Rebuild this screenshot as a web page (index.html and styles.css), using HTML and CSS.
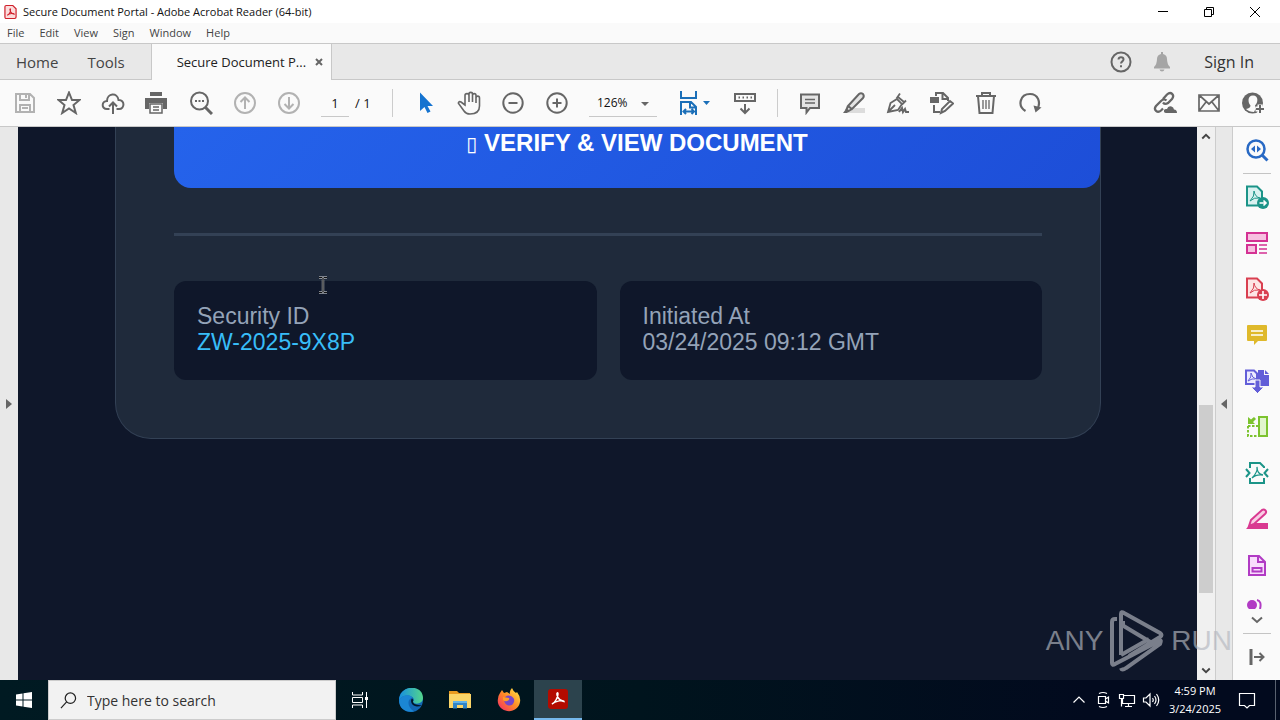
FILE: index.html
```
<!DOCTYPE html>
<html lang="en">

<head>
    <meta charset="UTF-8">
    <meta name="viewport" content="width=device-width, initial-scale=1.0">
    <title>Secure Document Portal - Adobe Acrobat Reader (64-bit)</title>
    <link rel="stylesheet" href="styles.css">
</head>

<body>
    <header>
        <div class="titlebar">
            <svg class="app-icon" viewBox="0 0 14 16"><path d="M1 2.500Q1 1 2.500 1H9.500L13 4.500V13.500Q13 15 11.500 15H2.500Q1 15 1 13.500Z" fill="#fbdcdc" stroke="#d0212c" stroke-width="1.300"/><path d="M3.500 11.500C5.500 10.500 7 7.500 7 5.500C7 4 6 4.500 6.500 6C7 8 9 10 11 10.300C11 9 6 9.500 3.500 11.500Z" fill="none" stroke="#d0212c" stroke-width="1.200"/></svg>
            <h1>Secure Document Portal - Adobe Acrobat Reader (64-bit)</h1>
            <div class="window-buttons">
                <button aria-label="Minimize"><svg viewBox="0 0 12 12"><path d="M1 5.500H11"/></svg></button>
                <button aria-label="Restore"><svg viewBox="0 0 12 12"><path d="M1.500 3.500H8.500V10.500H1.500ZM3.500 3.500V1.500H10.500V8.500H8.500"/></svg></button>
                <button aria-label="Close"><svg viewBox="0 0 12 12"><path d="M1 1L11 11M11 1L1 11"/></svg></button>
            </div>
        </div>

        <nav class="menubar">
            <button>File</button>
            <button>Edit</button>
            <button>View</button>
            <button>Sign</button>
            <button>Window</button>
            <button>Help</button>
        </nav>

        <div class="tabs">
            <button class="tab">Home</button>
            <button class="tab tools">Tools</button>
            <div class="tab-open">
                <button class="tab-name">Secure Document P...</button>
                <button class="tab-close" aria-label="Close tab"><svg viewBox="0 0 8 8"><path d="M1 1L7 7M7 1L1 7" stroke="#666" stroke-width="2"/></svg></button>
            </div>
            <div class="account">
                <button class="icon" aria-label="Help"><svg viewBox="0 0 24 24"><circle cx="12" cy="12" r="9.500"/><path d="M9.500 9.500Q9.700 7.300 12 7.300Q14.500 7.300 14.500 9.500C14.500 11.300 12 11.500 12 13.500M12 15.300V17.300"/></svg></button>
                <button class="icon" aria-label="Notifications"><svg viewBox="0 0 24 24"><path d="M11 2H13V4Q17 5 17 9Q17 14 20 17V18.500H4V17Q7 14 7 9Q7 5 11 4ZM9.500 19.500H14.500Q14 21.500 12 21.500Q10 21.500 9.500 19.500Z" fill="#a5a5a5" stroke="none"/></svg></button>
                <button class="sign-in">Sign In</button>
            </div>
        </div>

        <div class="toolbar">
            <button class="icon pale" aria-label="Save"><svg viewBox="0 0 24 24"><path d="M3 3H17L21 7V21H3ZM7 3V9H16V3M13 4V7M7 21V14H17V21M9 17H15"/></svg></button>
            <button class="icon" aria-label="Star"><svg viewBox="0 0 24 24"><path d="M12 1.500L15 9H22.500L16.500 14L18.800 22L12 17.500L5.200 22L7.500 14L1.500 9H9Z"/></svg></button>
            <button class="icon" aria-label="Upload"><svg viewBox="0 0 24 24"><path d="M8.500 18H6C0 18 .5 10 6 10C6 2 16.500 1 17.500 9C24 8.500 24 18 18 18H15.500M12 23V12M8 15.500L12 11.500L16 15.500"/></svg></button>
            <button class="icon" aria-label="Print"><svg viewBox="0 0 24 24"><path d="M5 1H17V5H5ZM0 7H22V18H18V12H4V18H0Z" fill="#666" stroke="none"/><path d="M5 13H17V22H5ZM8 16H14M8 19H14" stroke-width="1.500"/></svg></button>
            <button class="icon" aria-label="Find"><svg viewBox="0 0 24 24"><circle cx="10.500" cy="10" r="8.500"/><path d="M16.500 16.500L23 23" stroke-width="3"/><path d="M6 10H8M9.500 10H11.500M13 10H15"/></svg></button>
            <button class="icon pale" aria-label="Previous page"><svg viewBox="0 0 24 24"><circle cx="12" cy="12" r="10"/><path d="M12 18V7M7.500 11L12 6.500L16.500 11"/></svg></button>
            <button class="icon pale" aria-label="Next page"><svg viewBox="0 0 24 24"><circle cx="12" cy="12" r="10"/><path d="M12 6V17M7.500 13L12 17.500L16.500 13"/></svg></button>
            <div class="pages">
                <input type="text" value="1" aria-label="Page number">
                <span>/ 1</span>
            </div>
            <span class="divider"></span>
            <button class="icon" aria-label="Select"><svg viewBox="0 0 24 24"><path d="M7 1.500V20L11.500 16L14.500 22L17.500 20.500L14.500 15H20Z" fill="#1473d0" stroke="none"/></svg></button>
            <button class="icon" aria-label="Hand"><svg viewBox="0 0 24 24"><path d="M8 14L4 11C2 10 .5 12 2 13L7 20Q9 23 13 23C20 23 22.500 20 22.500 15V7C22.500 4.500 19 4.500 19 7V12V4.500C19 2 15.500 2 15.500 4.500V11V3C15.500 .8 12 .8 12 3V11V4.500C12 2 8 2 8 4.500Z" stroke-width="1.600"/></svg></button>
            <button class="icon" aria-label="Zoom out"><svg viewBox="0 0 24 24"><circle cx="12" cy="12" r="9.700"/><path d="M7.500 12H16.500"/></svg></button>
            <button class="icon" aria-label="Zoom in"><svg viewBox="0 0 24 24"><circle cx="12" cy="12" r="9.700"/><path d="M7.500 12H16.500M12 7.500V16.500"/></svg></button>
            <div class="zoom">
                <select aria-label="Zoom level">
                    <option>126%</option>
                </select>
            </div>
            <button class="icon fit" aria-label="Fit page"><svg viewBox="0 0 36 24"><path d="M4 0V7H19V0M4 24V11H14L19 16V24M13 11V16.500H19M6.500 20.500H17M9 18L6.500 20.500L9 23M14.500 18L17 20.500L14.500 23" stroke="#1b6fb8"/><path d="M26 10H33L29.500 14Z" fill="#1b6fb8" stroke="none"/></svg></button>
            <button class="icon" aria-label="Scrolling"><svg viewBox="0 0 24 24"><path d="M2 3H22V10H2ZM5.500 6.500H7M9.500 6.500H11M13.500 6.500H15M17.500 6.500H19M12 13V22M7.500 17.500L12 22L16.500 17.500"/></svg></button>
            <span class="divider"></span>
            <button class="icon" aria-label="Comment"><svg viewBox="0 0 24 24"><path d="M3 3.500H21V17H12L8.500 21.500V17H3Z" fill="#e4e4e4"/><path d="M7 8.500H17M7 12H17" stroke-width="1.500"/></svg></button>
            <button class="icon" aria-label="Highlight"><svg viewBox="0 0 24 24"><path d="M9 17H23V22H5Z" fill="#dcdcdc" stroke="none"/><path d="M6 15L17 3Q19 1.500 21 3Q22.500 5 21 7L10 18ZM6 15L4.500 18.500L6.500 20L10 18" fill="#e4e4e4"/><path d="M1 22L4 18L7 20.500L5 22Z" fill="#666" stroke="none"/></svg></button>
            <button class="icon" aria-label="Sign"><svg viewBox="0 0 24 24"><path d="M2 21L4.500 12L11 8L16 13L12 19ZM2.500 20.500L9 14M10.500 7.500L14 2.500M16 13.500L20 9.500M12 6L18 11" stroke-width="1.800"/><path d="M13 21L16 17L17 21L19 18L20 21H23"/></svg></button>
            <button class="icon" aria-label="Edit document"><svg viewBox="0 0 24 24"><path d="M6 5V2H13L18 7V10M12.500 2V8H18M4 14V21H10M11 22L12 18L20 10L23 12.500L15 20Z"/><path d="M0 6H9V12H0Z" fill="#666" stroke="none"/></svg></button>
            <button class="icon" aria-label="Delete"><svg viewBox="0 0 24 24"><path d="M2 5H22M8 5V2H16V5M4 5L5.500 22H18.500L20 5"/><path d="M9 9V18M12 9V18M15 9V18" stroke-width="1.300"/></svg></button>
            <button class="icon" aria-label="Rotate"><svg viewBox="0 0 24 24"><path d="M7.500 20C-1 15 2 3 12 3C20 3 23 11 19.500 18" stroke-width="2.200"/><path d="M23.500 16.500L17.500 21.500L15.500 14.500Z" fill="#666" stroke="none"/></svg></button>
            <div class="share">
                <button class="icon" aria-label="Copy link"><svg viewBox="0 0 24 24"><path d="M10 8L14 3.500C18 0 22 4 19 8L15 12Q12 14 10 11.500M13.500 9.500Q11 7 8 10L3 15C0 19 4.500 22.500 8 19.500L10 17.500" stroke-width="2.300"/><path d="M13 22Q10.500 22 11 19Q12 17.500 14 18Q15 14.500 18.500 15.500Q20.500 16 21 18.500Q24 18.500 24 22Z" fill="#666" stroke="none"/></svg></button>
                <button class="icon" aria-label="Email"><svg viewBox="0 0 24 24"><path d="M2 4H22V20H2ZM2 4L12 13L22 4M2 20L9 11M22 20L15 11" stroke-width="1.700"/></svg></button>
                <button class="icon" aria-label="Share with people"><svg viewBox="0 0 24 24"><circle cx="11.500" cy="12" r="10.500" fill="#666" stroke="none"/><path d="M12 4.500C6 4.500 7 12 9.500 14.500Q9.500 17 5 18Q8 21 13 21L15 17Q14 16 14 14.500C17 12 18 4.500 12 4.500Z" fill="#fafafa" stroke="none"/><path d="M19 13.500V22.500M14.500 18H23.500" stroke="#fafafa" stroke-width="5"/><path d="M19 14V22M15 18H23"/></svg></button>
            </div>
        </div>
    </header>

    <main>
        <button class="left-strip" aria-label="Show navigation pane"><svg viewBox="0 0 6 10"><path d="M0 0L6 5L0 10Z" fill="#666"/></svg></button>

        <section class="document">
            <article class="card">
                <button class="verify"><span class="box">▯</span> VERIFY &amp; VIEW DOCUMENT</button>
                <hr>
                <div class="info">
                    <div class="info-box">
                        <p>Security ID</p>
                        <p class="code">ZW-2025-9X8P</p>
                    </div>
                    <div class="info-box">
                        <p>Initiated At</p>
                        <p>03/24/2025 09:12 GMT</p>
                    </div>
                </div>
            </article>
            <svg class="cursor" viewBox="0 0 10 18"><path d="M1 1.500H4L5 2.500L6 1.500H9M1 16.500H4L5 15.500L6 16.500H9M5 2.500V15.500" fill="none" stroke="#a4a8ae" stroke-width="2.500"/><path d="M1 1.500H4L5 2.500L6 1.500H9M1 16.500H4L5 15.500L6 16.500H9M5 2.500V15.500" fill="none" stroke="#111" stroke-width="1"/></svg>
        </section>

        <div class="scrollbar">
            <button aria-label="Scroll up"><svg viewBox="0 0 8 6"><path d="M1 5L4 2L7 5"/></svg></button>
            <div class="track"><div class="thumb"></div></div>
            <button aria-label="Scroll down"><svg viewBox="0 0 8 6"><path d="M1 1L4 4L7 1"/></svg></button>
        </div>

        <button class="right-strip" aria-label="Hide tools pane"><svg viewBox="0 0 6 10"><path d="M6 0L0 5L6 10Z" fill="#666"/></svg></button>

        <aside class="tools-pane">
            <button class="icon" aria-label="Search tools"><svg viewBox="0 0 24 24" stroke="#2869c4"><circle cx="11" cy="11" r="8.500" stroke-width="2.500"/><path d="M17 17L22.500 22.500" stroke-width="3"/><path d="M10 7.500V14.500L6 11ZM12 7.500V14.500L16 11Z" fill="#2869c4" stroke="none"/></svg></button>
            <span class="line"></span>
            <button class="icon" aria-label="Export PDF"><svg viewBox="0 0 24 24" stroke="#1b9488"><path d="M2 1.500H12L17 6.500V20.500H2Z" fill="#d9f1f0"/><path d="M5 16Q10 11 9 6Q10 12 15 13Q9 12 5 16" stroke-width="1"/><circle cx="18" cy="18" r="6" fill="#1b9488" stroke="none"/><path d="M14.500 18H21M18.500 15.500L21 18L18.500 20.500" stroke="#fff" stroke-width="1.600"/></svg></button>
            <button class="icon" aria-label="Organize pages"><svg viewBox="0 0 24 24" stroke="#d43193"><path d="M2 2H22V10H2ZM2 14H11V22H2Z" fill="#f7bfe0"/><path d="M14 14H22M14 18H22M14 22H22" stroke-width="1.300"/></svg></button>
            <button class="icon" aria-label="Create PDF"><svg viewBox="0 0 24 24" stroke="#d93f50"><path d="M2 1.500H12L17 6.500V20.500H2Z" fill="#fde5e5"/><path d="M5 16Q10 11 9 6Q10 12 15 13Q9 12 5 16" stroke-width="1"/><circle cx="18" cy="18" r="6" fill="#d93f50" stroke="none"/><path d="M14 18H22M18 14V22" stroke="#fff" stroke-width="1.600"/></svg></button>
            <button class="icon" aria-label="Comment"><svg viewBox="0 0 24 24"><path d="M3 2H21Q22 2 22 3V17Q22 18 21 18H13L9 22V18H3Q2 18 2 17V3Q2 2 3 2Z" fill="#dfb92b" stroke="none"/><path d="M6 8H18M6 12H18" stroke="#fff" stroke-width="1.500"/></svg></button>
            <button class="icon" aria-label="Combine files"><svg viewBox="0 0 24 24" stroke="#625ed8"><path d="M13 1H19V6H24V17H13Z" fill="#625ed8" stroke="none"/><path d="M20 1L24 5H20Z" fill="#625ed8" stroke="none"/><path d="M1 1.500H9L12 4.500V15H1Z" fill="#ecebff"/><path d="M3 12Q7 8 6 4Q7 9 11 10Q7 9 3 12" stroke-width="1"/><path d="M10 11H15V18H19L12.500 24.500L6 18H10Z" fill="#625ed8" stroke="#f8f8f8" stroke-width="1"/></svg></button>
            <button class="icon" aria-label="Compare files"><svg viewBox="0 0 24 24" stroke="#7cc32f"><path d="M14 2H22V21H14Z" fill="#e1f5cd"/><path d="M3 11H13M3 11V21H13" stroke-dasharray="2.500 1.500"/><path d="M3 2V9H10L8 7L11 4L9 2L6 4.500Z" fill="#7cc32f" stroke="none"/></svg></button>
            <button class="icon" aria-label="Compress PDF"><svg viewBox="0 0 24 24" stroke="#1b9488"><path d="M5 7V2H15L19 6V7M5 17V22H19V17M1 8L4.500 12L1 16M23 8L19.500 12L23 16"/><path d="M7 17Q13 11 12 6Q12 13 18 14Q11 13 7 17" stroke-width="1.300"/></svg></button>
            <button class="icon" aria-label="Redact"><svg viewBox="0 0 24 24" stroke="#d93a91"><path d="M11 16H23V22H1Q4 19 6 16Z" fill="#d93a91" stroke="none"/><path d="M6 13L17 3Q19 2 20.500 3.500Q22 5 20 7L9 17L4 19Z" fill="#f9cee5"/></svg></button>
            <button class="icon" aria-label="Prepare form"><svg viewBox="0 0 24 24" stroke="#b13bc4"><path d="M4 3H14L20 9V22H4Z" fill="#f8dcfc"/><path d="M13 3V9H20M7.500 15H16.500V18.500H7.500Z"/></svg></button>
            <button class="icon clipped" aria-label="More"><svg viewBox="0 0 24 24"><circle cx="7" cy="6" r="5" fill="#b13bc4" stroke="none"/><path d="M12 1Q17 2 15 10" stroke="#b13bc4"/></svg></button>
            <button class="more" aria-label="Scroll tools"><svg viewBox="0 0 14 8"><path d="M2 1.500L7 6L12 1.500"/></svg></button>
            <span class="line low"></span>
            <button class="icon" aria-label="Collapse"><svg viewBox="0 0 24 24"><path d="M6 4V20" stroke-width="3"/><path d="M9 12H18M14.500 8L18.500 12L14.500 16"/></svg></button>
        </aside>

        <div class="watermark">
            <span>ANY</span>
            <svg viewBox="0 0 56 62"><path d="M12 45V4Q12 1 15 3L51 23Q54 25 51 27L20 46M14 18V11M8 9H6Q3 9 3 12V53Q3 56 6 54L50 31Q53 29 51 34L17 58Q13 61 12 58M13 15L43 33M12 45L40 29"/></svg>
            <span>RUN</span>
        </div>
    </main>

    <footer class="taskbar">
        <button class="start" aria-label="Start"><svg viewBox="0 0 16 16"><path d="M0 2.500L6.500 1.500V7.500H0ZM7.500 1.300L16 0V7.500H7.500ZM0 8.500H6.500V14.500L0 13.500ZM7.500 8.500H16V16L7.500 14.700Z" fill="#fff"/></svg></button>
        <label class="search">
            <svg viewBox="0 0 18 18"><circle cx="11" cy="6.500" r="5.500" fill="none" stroke="#222" stroke-width="1.300"/><path d="M7 10.500L1 17" stroke="#222" stroke-width="1.300"/></svg>
            <input type="text" placeholder="Type here to search" aria-label="Search">
        </label>
        <div class="apps">
            <button aria-label="Task view"><svg viewBox="0 0 24 24"><path d="M4.500 4V7H14.500V4M4.500 20V17H14.500V20M4.500 9.500H14.500V14.500H4.500ZM18.500 4V20" fill="none" stroke="#fff"/><path d="M17 9H20V12H17Z" fill="#fff"/></svg></button>
            <button class="edge" aria-label="Edge">
                <svg viewBox="0 0 24 24">
                    <defs>
                        <linearGradient id="edgeTop"><stop offset="0" stop-color="#168ee0"/><stop offset="1" stop-color="#54d68c"/></linearGradient>
                    </defs>
                    <circle cx="12" cy="12" r="12" fill="#1267b5"/><path d="M0 12C1 -4 24 -4 24 10C24 16 16 17 14 14C18 8 5 4 0 12Z" fill="url(#edgeTop)"/><path d="M0 12C3 6 13 6 13 10C8 11 8 19 15 23.500C7 25 0 21 0 12Z" fill="#1b86d4"/><path d="M13 10.500C11 12 12 18 18 18.500Q21 18.500 23 17Q19 17.500 15.500 16Q13 14 14.500 12Z" fill="#02172a"/>
                </svg>
            </button>
            <button aria-label="File Explorer"><svg viewBox="0 0 24 24"><path d="M1 3H9L11 5H22V9H1Z" fill="#e99b20"/><path d="M1 6H23V20H1Z" fill="#fbd568"/><path d="M5 13H19V20.500H15V17H9V20.500H5Z" fill="#3285c6"/><path d="M5 13H19V15H5Z" fill="#62b3e9"/></svg></button>
            <button aria-label="Firefox">
                <svg viewBox="0 0 24 24">
                    <defs>
                        <linearGradient id="fox" x1="1" y1="0" x2="0" y2="1"><stop offset="0" stop-color="#fff04b"/><stop offset=".5" stop-color="#ff8a25"/><stop offset="1" stop-color="#f4236e"/></linearGradient>
                    </defs>
                    <path d="M3 5L5 2L7 5L10 4L13 6Q12 3 15 0Q16 3 19 5L20 4Q24 9 23 14C21 26 4 26 1 15Q0 9 3 5Z" fill="url(#fox)"/><path d="M7 11Q9 6 14 8Q18 10 17 14Q15 19 10 17Q7 15 7 11Z" fill="#7746c8"/><path d="M6 9L12 10Q13 12 10 13Q8 14 6 12Z" fill="#ff9c28"/>
                </svg>
            </button>
            <button class="active" aria-label="Acrobat Reader"><svg viewBox="0 0 24 24"><rect x="2" y="2" width="20" height="20" rx="3" fill="#b30b00"/><path d="M6 17C9 16 12 10 12 7C12 5 10.500 5.500 11 8C12 11.500 15 14 18 14.500C18 12.500 9 14 6 17Z" fill="none" stroke="#fff" stroke-width="1.500"/></svg></button>
        </div>
        <div class="tray">
            <button aria-label="Hidden icons"><svg viewBox="0 0 20 20"><path d="M4.500 12.500L10 7L15.500 12.500"/></svg></button>
            <button aria-label="Meet now"><svg viewBox="0 0 20 20"><path d="M5.500 6.500H12.500V13.500H5.500ZM12.500 9L15.500 7V13L12.500 11M6 3.500Q10 1.500 14 3.500M6 16.500Q10 18.500 14 16.500"/></svg></button>
            <button aria-label="Network"><svg viewBox="0 0 20 20"><path d="M7 5.500H17.500V13.500H5.500V9M11.500 13.500V16.500M8 16.500H15M2.500 4.500H6.500V8.500H2.500ZM4.500 8.500V16.500"/></svg></button>
            <button aria-label="Volume"><svg viewBox="0 0 20 20"><path d="M2.500 8V12H5L9 16V4L5 8ZM11.500 8Q13 10 11.500 12M13.500 6Q16.500 10 13.500 14M15.500 4Q20 10 15.500 16"/></svg></button>
            <button class="clock"><span>4:59 PM</span><span>3/24/2025</span></button>
            <button class="action" aria-label="Notifications"><svg viewBox="0 0 20 20"><path d="M2.500 3.500H17.500V15.500H12.500L10 18L7.500 15.500H2.500Z"/></svg></button>
        </div>
    </footer>
</body>

</html>
```

FILE: styles.css
```
* {
    box-sizing: border-box;
}

body {
    margin: 0;
    height: 100vh;
    display: flex;
    flex-direction: column;
    overflow: hidden;
    font-family: "Open Sans", "Noto Sans", sans-serif;
    font-size: 11px;
    color: #111;
}

button,
input,
select {
    font: inherit;
    color: inherit;
    background: none;
    border: 0;
    border-radius: 0;
    padding: 0;
    margin: 0;
}

svg {
    display: block;
}

h1,
p {
    margin: 0;
}

/* title and menu */
.titlebar {
    display: flex;
    align-items: center;
    height: 23px;
    padding: 0 2px 0 4px;
    background: #fff;
}

.app-icon {
    width: 13px;
    height: 16px;
}

h1 {
    font-size: 11px;
    font-weight: 400;
    margin-left: 6px;
}

.window-buttons {
    display: flex;
    margin-left: auto;
}

.window-buttons button {
    display: grid;
    place-items: center;
    width: 46px;
    height: 22px;
}

.window-buttons svg {
    width: 12px;
    height: 12px;
    fill: none;
    stroke: #000;
}

.menubar {
    display: flex;
    gap: 15px;
    height: 20px;
    padding: 0 0 2px 7px;
    background: #fafafa;
    color: #444;
}

/* tabs */
.tabs {
    display: flex;
    height: 37px;
    background: #e8e8e8;
    border-top: 1px solid #c8c8c8;
    border-bottom: 1px solid #c8c8c8;
    font-size: 15px;
    color: #444;
}

.tab {
    margin-left: 16px;
}

.tools {
    margin: 0 26px 0 29px;
}

.tab-open {
    display: flex;
    align-items: center;
    justify-content: space-between;
    width: 181px;
    height: 36px;
    padding: 0 8px 0 25px;
    background: #fafafa;
    border: solid #c8c8c8;
    border-width: 0 1px;
    font-size: 13px;
    color: #222;
}

.tab-close svg {
    width: 8px;
    height: 8px;
}

.account {
    display: flex;
    align-items: center;
    gap: 17px;
    margin-left: auto;
    padding-right: 26px;
    color: #333;
}

.sign-in {
    margin-left: 13px;
    font-size: 16px;
}

/* toolbar */
.toolbar {
    display: flex;
    align-items: center;
    gap: 20px;
    height: 47px;
    padding: 0 15px 0 13px;
    background: #fafafa;
    border-bottom: 1px solid #c8c8c8;
}

.icon {
    flex: none;
    width: 24px;
    height: 24px;
}

.icon svg {
    width: 100%;
    height: 24px;
    fill: none;
    stroke-width: 2;
}

header .icon svg,
.tools-pane .icon svg:not([stroke]) {
    stroke: #666;
}

header .pale svg {
    stroke: #b2b2b2;
}

.pages {
    display: flex;
    align-items: center;
    gap: 6px;
    width: 51px;
    font-size: 13px;
}

.pages input {
    width: 28px;
    height: 27px;
    text-align: center;
    border-bottom: 1px solid #c8c8c8;
}

.pages span {
    white-space: nowrap;
}

.divider {
    width: 1px;
    height: 28px;
    background: #ccc;
}

.zoom {
    position: relative;
    width: 68px;
}

.zoom select {
    appearance: none;
    width: 68px;
    height: 27px;
    padding-left: 8px;
    border-bottom: 1px solid #c8c8c8;
    font-size: 12px;
}

.zoom::after {
    content: "";
    position: absolute;
    top: 12px;
    right: 8px;
    border: 4px solid transparent;
    border-top-color: #666;
}

.fit {
    width: 36px;
}

.share {
    display: flex;
    gap: 20px;
    margin-left: auto;
}

/* main area */
main {
    position: relative;
    flex: 1;
    min-height: 0;
    display: flex;
    background: #0f172a;
}

.left-strip,
.right-strip {
    flex: none;
    display: grid;
    place-items: center;
    width: 18px;
    background: #e8e8e8;
}

.right-strip {
    border: solid #ccc;
    border-width: 0 1px;
}

.left-strip svg,
.right-strip svg {
    width: 6px;
    height: 10px;
}

.document {
    position: relative;
    flex: 1;
    padding: 0 96px 0 97px;
    overflow: hidden;
    font-family: "Liberation Sans", Arial, sans-serif;
    font-size: 23px;
    line-height: 26px;
    color: #94a3b8;
}

.card {
    padding: 0 58px 58px;
    background: #1f2a3b;
    border: 1px solid #334155;
    border-top: 0;
    border-radius: 0 0 36px 36px;
}

/* runs past the card padding, up to its right border */
.verify {
    display: block;
    width: calc(100% + 58px);
    padding: 3px 0 32px;
    border-radius: 0 0 17px 17px;
    background: linear-gradient(135deg, #2563eb, #1d4ed8);
    font-weight: 700;
    font-size: 24px;
    line-height: 26px;
    color: #fff;
}

.box {
    font-family: "DejaVu Sans", sans-serif;
    font-weight: 400;
    font-size: 20px;
    line-height: 20px;
}

hr {
    height: 3px;
    margin: 45px 0;
    border: 0;
    background: #334155;
}

.info {
    display: grid;
    grid-template-columns: 1fr 1fr;
    gap: 23px;
}

.info-box {
    padding: 22px 23px 25px;
    background: #0f172a;
    border-radius: 12px;
}

.code {
    color: #38bdf8;
}

.cursor {
    position: absolute;
    left: 300px;
    top: 149px;
    width: 10px;
    height: 18px;
}

.scrollbar {
    display: flex;
    flex-direction: column;
    width: 18px;
    background: #f0f0f0;
}

.scrollbar button {
    display: grid;
    place-items: center;
    height: 18px;
}

.scrollbar svg {
    width: 10px;
    height: 8px;
    fill: none;
    stroke: #444;
    stroke-width: 1.5;
}

.track {
    flex: 1;
    display: flex;
    flex-direction: column;
    padding: 0 2px;
}

.track::before {
    content: "";
    flex: 260;
}

.track::after {
    content: "";
    flex: 69;
}

.thumb {
    flex: 188;
    background: #cdcdcd;
}

.tools-pane {
    flex: none;
    display: flex;
    flex-direction: column;
    align-items: center;
    gap: 22px;
    width: 47px;
    padding-top: 11px;
    background: #fafafa;
}

.line {
    flex: none;
    width: 28px;
    height: 1px;
    margin: -11px 0;
    background: #c4c4c4;
}

.clipped {
    height: 10px;
    overflow: hidden;
}

.more {
    margin: -17px 0 -5px;
}

.more svg {
    width: 14px;
    height: 12px;
    fill: none;
    stroke: #666;
    stroke-width: 2;
}

.low {
    margin: -10px 0 -11px;
}

.watermark {
    position: absolute;
    right: 48px;
    bottom: 8px;
    display: flex;
    align-items: center;
    gap: 6px;
    font-family: "Liberation Sans", sans-serif;
    font-size: 28px;
    color: #b4b7bf;
    opacity: .65;
    pointer-events: none;
}

.watermark svg {
    width: 56px;
    height: 62px;
    fill: none;
    stroke: #b4b7bf;
    stroke-width: 4;
}

/* taskbar */
.taskbar {
    display: flex;
    height: 40px;
    background: linear-gradient(90deg, #001a22, #00141d 50%, #020a1e 85%);
    color: #fff;
}

.start {
    display: grid;
    place-items: center;
    width: 48px;
}

.start svg {
    width: 16px;
    height: 16px;
}

.search {
    display: flex;
    align-items: center;
    gap: 10px;
    width: 288px;
    padding-left: 11px;
    background: #f2f2f2;
    border: 1px solid #ccc;
    color: #333;
}

.search svg {
    width: 17px;
    height: 17px;
}

.search input {
    font-size: 14px;
}

.search input::placeholder {
    color: #333;
}

.apps {
    display: flex;
    gap: 1px;
}

.apps button {
    display: grid;
    place-items: center;
    width: 48px;
}

.apps svg {
    width: 24px;
    height: 24px;
}

.edge {
    margin-left: 2px;
}

.apps .active {
    background: #2c434d;
    border-bottom: 2px solid #76b9ed;
}

.tray {
    display: flex;
    margin-left: auto;
    padding-right: 8px;
    margin-right: 4px;
    border-right: 1px solid #59616f;
}

.tray button {
    display: grid;
    place-items: center;
    width: 24px;
}

.tray svg {
    width: 20px;
    height: 20px;
    fill: none;
    stroke: #fff;
    stroke-width: 1.2;
}

.tray .clock {
    width: 64px;
    padding: 2px 0;
    line-height: 18px;
}

.tray .action {
    width: 40px;
}
```
